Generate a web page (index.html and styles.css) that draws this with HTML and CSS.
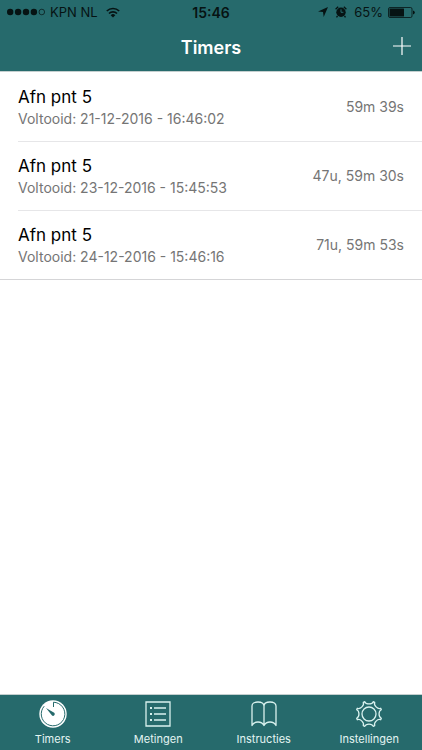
FILE: index.html
```html
<!DOCTYPE html>
<html lang="nl">
<head>
<meta charset="utf-8">
<meta name="viewport" content="width=device-width, initial-scale=1">
<title>Timers</title>
<link rel="stylesheet" href="styles.css">
</head>
<body>
<header class="top">
  <div class="status">
    <div class="status-side">
      <svg class="dots" width="38" height="8" viewBox="0 0 38 8" aria-hidden="true"><circle cx="3.2" cy="4" r="3.2"/><circle cx="11.1" cy="4" r="3.2"/><circle cx="19" cy="4" r="3.2"/><circle cx="26.9" cy="4" r="3.2"/><circle cx="34.8" cy="4" r="2.8" fill="none" stroke="#061313" stroke-width=".7"/></svg>
      <span>KPN NL</span>
      <svg class="wifi" width="14" height="11" viewBox="0 0 14 11" fill="none" stroke="#061313" stroke-width="1.7" aria-hidden="true"><path d="M.8 4A9 9 0 0 1 13.2 4M3 6.500A5.800 5.800 0 0 1 11 6.500"/><path d="M7 10.500 4.700 8.200A3.300 3.300 0 0 1 9.300 8.200Z" fill="#061313" stroke="none"/></svg>
    </div>
    <time class="clock">15:46</time>
    <div class="status-side status-end">
      <svg class="arrow" width="10" height="10" viewBox="0 0 10 10" aria-hidden="true"><path d="M10 0 5.700 10 5 5 0 4.400Z"/></svg>
      <svg class="alarm" width="12" height="12" viewBox="0 0 12 12" aria-hidden="true"><circle cx="6" cy="6.300" r="4.700"/><path d="M.6 3.200 3.200.8M11.400 3.200 8.800.8M2.500 10 1.500 11.400M9.500 10l1 1.400" stroke="#061313" stroke-width="1.300"/><path d="M6 3.300v3h2.400" fill="none" stroke="#266a6c" stroke-width="1"/></svg>
      <span>65%</span>
      <svg class="battery" width="27" height="11" viewBox="0 0 27 11" aria-hidden="true"><rect x=".5" y=".5" width="23.500" height="10" rx="1.500" fill="none" stroke="#061313" stroke-width=".8"/><rect x="1.500" y="1.500" width="14.500" height="8" rx=".5"/><path d="M25 3.500q1.800.4 1.800 2t-1.800 2z"/></svg>
    </div>
  </div>
  <div class="navbar">
    <h1>Timers</h1>
    <button class="add" type="button" aria-label="Timer toevoegen"><svg width="18" height="18" viewBox="0 0 18 18" fill="none" stroke="#fff" stroke-width="1.200" aria-hidden="true"><path d="M9 0v18M0 9h18"/></svg></button>
  </div>
</header>
<main>
  <ul class="timers">
    <li><div class="row"><div><h2>Afn pnt 5</h2><p>Voltooid: 21-12-2016 - 16:46:02</p></div><span class="left">59m 39s</span></div></li>
    <li><div class="row"><div><h2>Afn pnt 5</h2><p>Voltooid: 23-12-2016 - 15:45:53</p></div><span class="left">47u, 59m 30s</span></div></li>
    <li><div class="row"><div><h2>Afn pnt 5</h2><p>Voltooid: 24-12-2016 - 15:46:16</p></div><span class="left">71u, 59m 53s</span></div></li>
  </ul>
</main>
<nav class="tabs">
  <a href="#timers" aria-current="page">
    <svg width="28" height="28" viewBox="0 0 28 28" aria-hidden="true"><circle cx="14" cy="14" r="13.700" fill="#fff"/><path d="M14.500 7V2.200A11.800 11.800 0 1 1 5.200 6.200" fill="none" stroke="#266a6c" stroke-width="1"/><path d="M7 8 15.200 12.800A1.700 1.700 0 1 1 12.800 15.200Z" fill="#266a6c"/></svg>
    <span>Timers</span>
  </a>
  <a href="#metingen">
    <svg width="28" height="28" viewBox="0 0 28 28" fill="none" stroke="#d9f2ef" stroke-width="1.300" aria-hidden="true"><path d="M2 2H26V26H2ZM10 8h12M10 14h12M10 20h12"/><path d="M6 8h2M6 14h2M6 20h2" stroke-width="2"/></svg>
    <span>Metingen</span>
  </a>
  <a href="#instructies">
    <svg width="28" height="28" viewBox="0 0 28 28" fill="none" stroke="#d9f2ef" stroke-width="1.300" stroke-linejoin="round" aria-hidden="true"><path d="M14 25.500V6C14 3.500 11.500 2 8 2S2 3.500 2 6V25.500C3 23.500 5 22 8 22s5 1.500 6 3.500C15 23.500 17 22 20 22s5 1.500 6 3.500V6C26 3.500 23.500 2 20 2S14 3.500 14 6"/></svg>
    <span>Instructies</span>
  </a>
  <a href="#instellingen">
    <svg width="28" height="28" viewBox="-14 -14 28 28" fill="none" stroke="#d9f2ef" stroke-width="1.300" stroke-linejoin="round" aria-hidden="true"><circle r="7"/><path d="M-4.230-12.320C-3-9.300 3-9.300 4.230-12.320L5.710-11.700C4.450-8.700 8.700-4.450 11.700-5.710L12.320-4.230C9.300-3 9.300 3 12.320 4.230L11.700 5.710C8.700 4.450 4.450 8.700 5.710 11.700L4.230 12.320C3 9.300-3 9.300-4.230 12.320L-5.710 11.700C-4.450 8.700-8.700 4.450-11.700 5.710L-12.320 4.230C-9.300 3-9.300-3-12.320-4.230L-11.700-5.710C-8.700-4.450-4.450-8.700-5.710-11.700Z"/></svg>
    <span>Instellingen</span>
  </a>
</nav>
</body>
</html>
```
FILE: styles.css
```css
* { box-sizing: border-box; }
body {
  margin: 0;
  min-height: 100vh;
  display: flex;
  flex-direction: column;
  background: #fff;
  color: #000;
  font-family: Inter, "Liberation Sans", sans-serif;
}
svg { display: block; flex: none; }
h1, h2, p, ul { margin: 0; padding: 0; }
.top { background: #266a6c; border-bottom: 1px solid #c4cfcf; }
.status {
  display: grid;
  grid-template-columns: 1fr auto 1fr;
  align-items: center;
  height: 24px;
  padding: 0 7px;
  color: #061313;
  fill: #061313;
  font-size: 13px;
}
.status-side { display: flex; align-items: center; gap: 5px; }
.status-end { justify-content: flex-end; }
.wifi { margin-left: 3px; }
.alarm { margin: 0 2px; }
.clock { font-size: 14px; font-weight: 600; }
.navbar {
  display: grid;
  grid-template-columns: 1fr auto 1fr;
  align-items: center;
  height: 47px;
  padding: 0 11px;
  color: #fff;
}
h1 { grid-column: 2; font-size: 18px; font-weight: 600; }
.add {
  justify-self: end;
  padding: 0 0 4px;
  border: 0;
  background: none;
}
.timers { list-style: none; border-bottom: 1px solid #d5d5d7; }
.timers li { padding-left: 18px; }
.row {
  display: flex;
  justify-content: space-between;
  align-items: center;
  height: 69px;
  padding-right: 18px;
}
li + li .row { border-top: 1px solid #e6e6e8; }
h2 { font-size: 17px; line-height: 24px; font-weight: 400; }
.row p, .left { color: #757575; font-size: 14px; line-height: 20px; }
.tabs {
  display: grid;
  grid-template-columns: repeat(4, 1fr);
  margin-top: auto;
  background: #266a6c;
  border-top: 1px solid #c4cfcf;
}
.tabs a {
  display: flex;
  flex-direction: column;
  align-items: center;
  gap: 3px;
  padding: 5px 0 3px;
  color: #e4f5f3;
  font-size: 11px;
  line-height: 16px;
  text-decoration: none;
}
```
